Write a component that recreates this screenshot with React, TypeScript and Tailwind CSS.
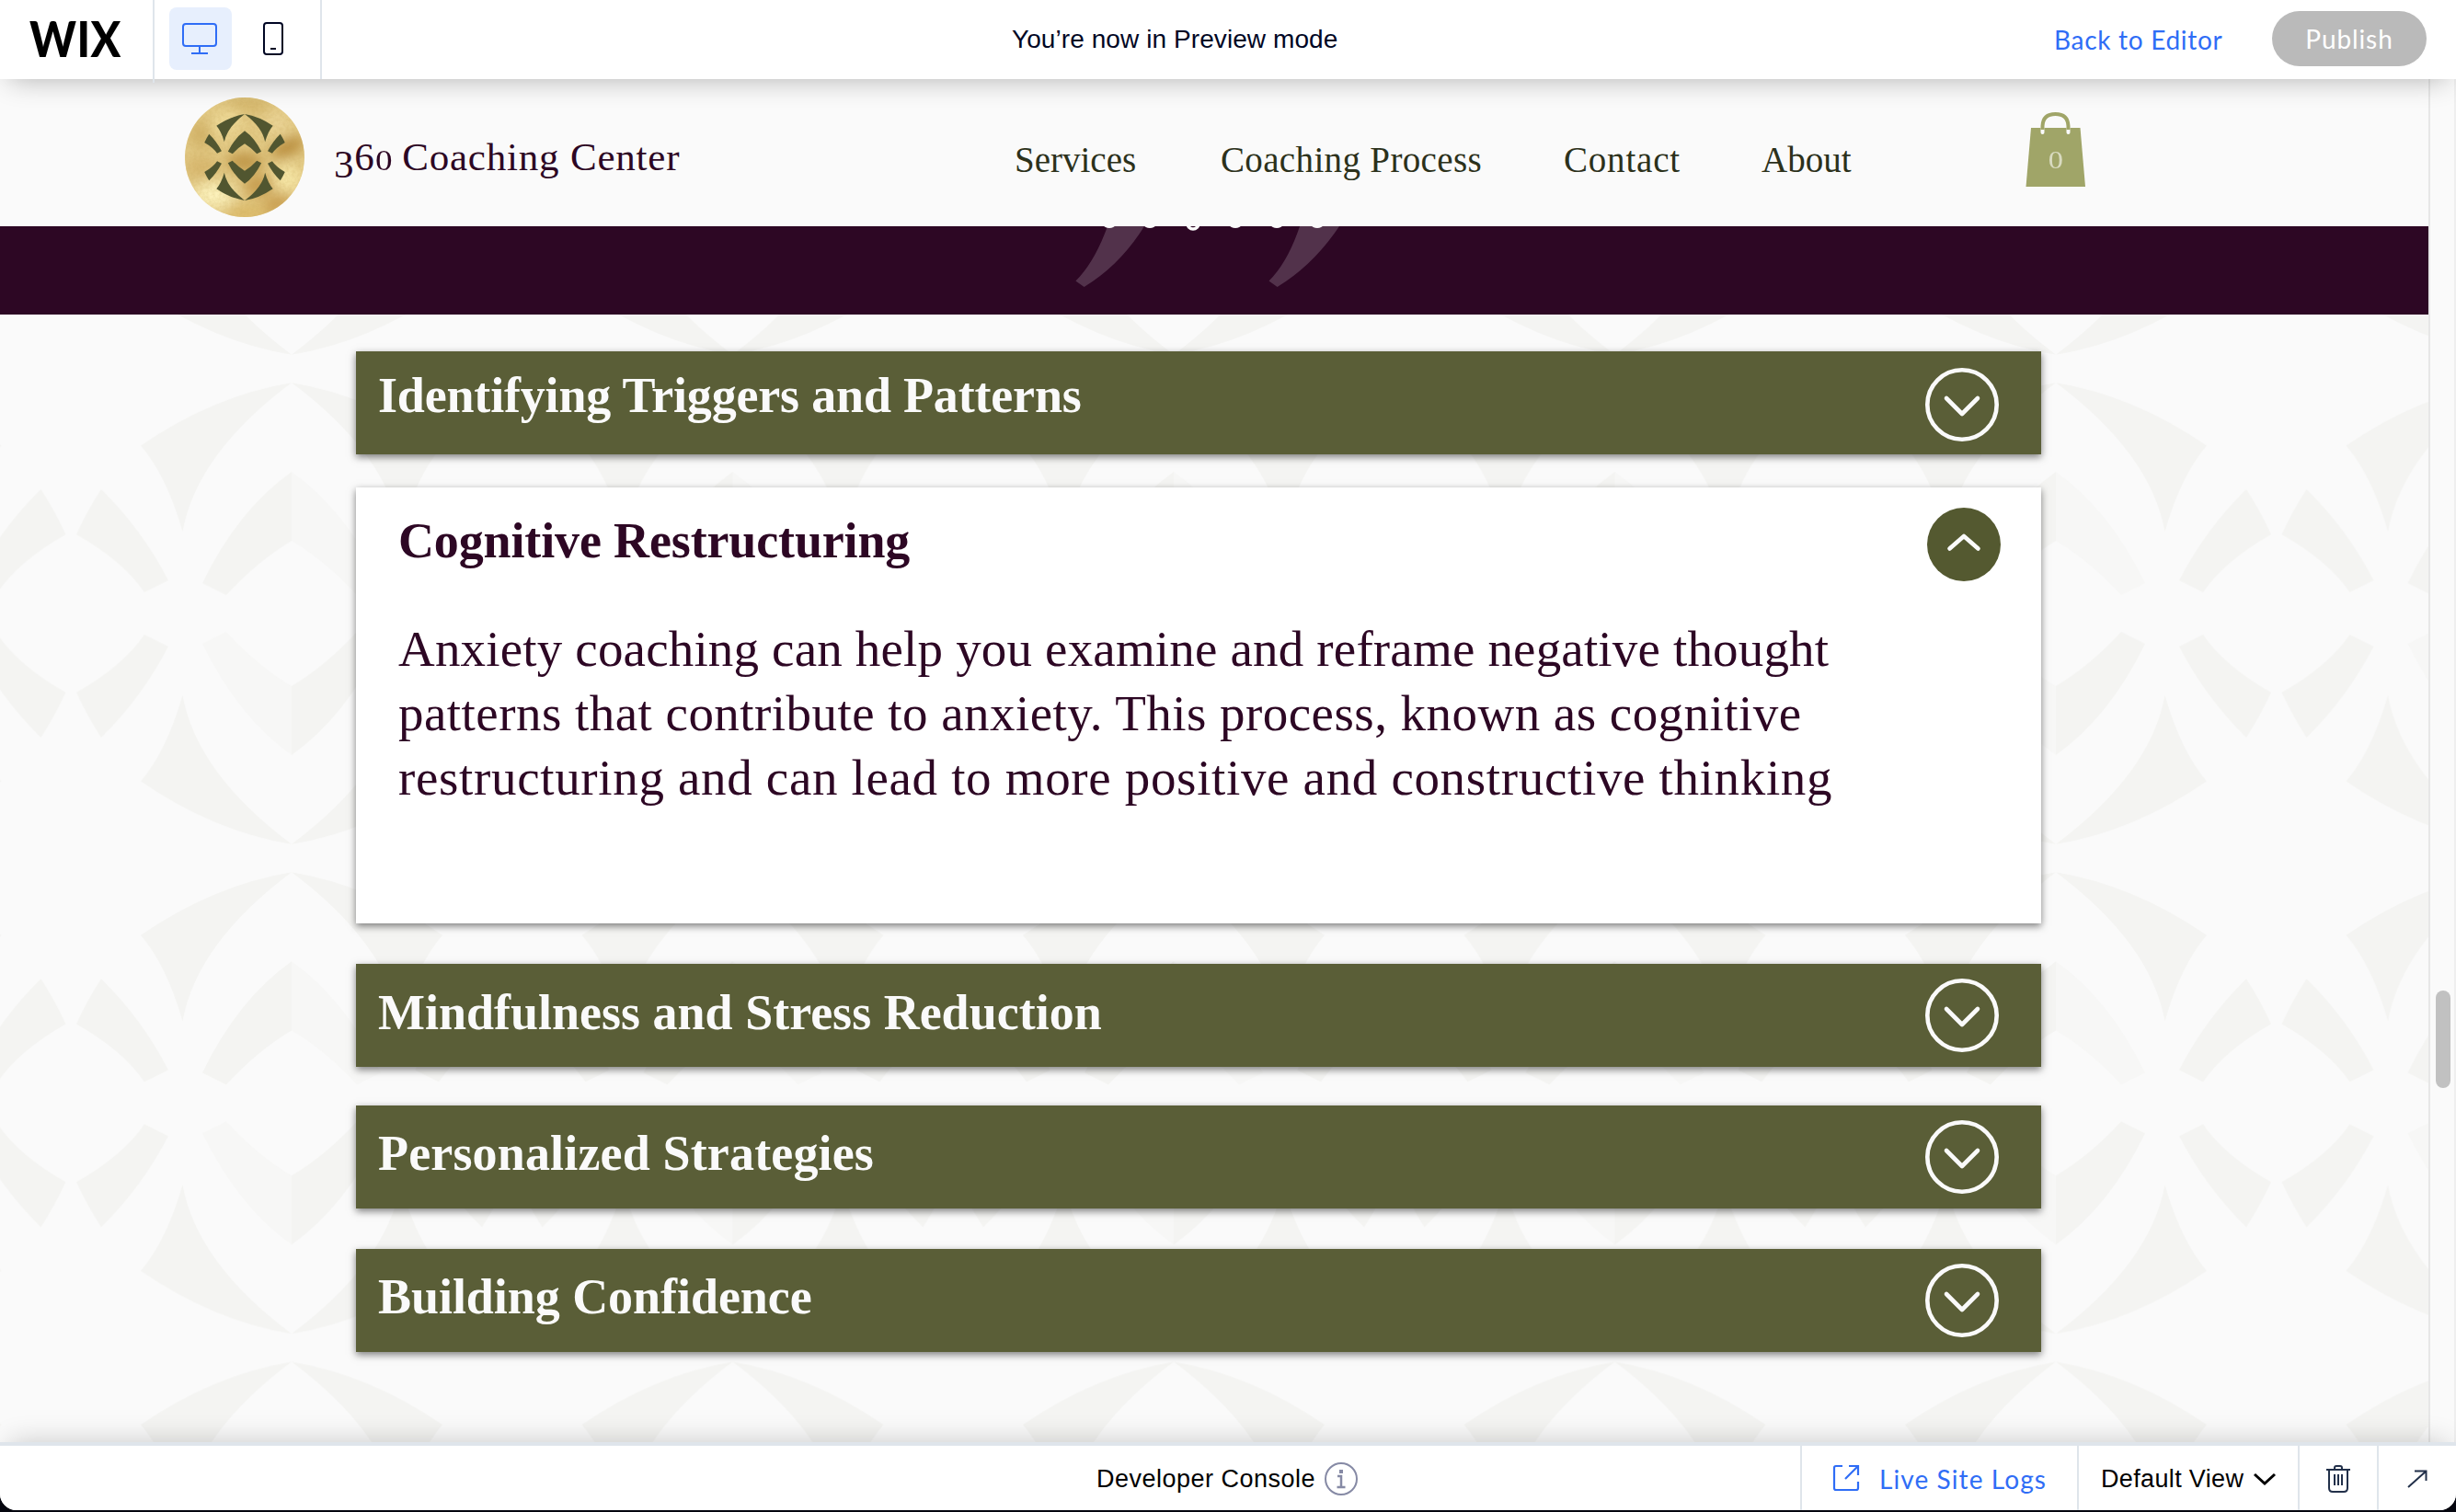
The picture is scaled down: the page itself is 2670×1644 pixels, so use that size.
import type { ReactNode } from 'react';

const SERIF = "font-['Liberation_Serif',serif]";
const SANS = "font-['Liberation_Sans',sans-serif]";
const LATO = "font-['Lato',sans-serif]";

/* One quarter of the emblem; the other three quarters are mirrored copies. */
function Quarter({ faint = false }: { faint?: boolean }) {
  return (
    <g>
      <path d="M0 -251Q-85 -237 -164 -182.5Q-136 -150 -118.5 -89Q-103 -174 0 -251Z" />
      <path d="M0 -154Q-58 -113 -97 -33L-71 -20Q-37 -57 0 -79Z" opacity={faint ? 0.5 : 1} />
      <path d="M-207 -135Q-163 -92 -134 -36L-160 -23Q-183 -57 -234 -86Q-222 -112 -207 -135Z" />
    </g>
  );
}

function Emblem({ shaded = false }: { shaded?: boolean }) {
  return (
    <g>
      <Quarter />
      <g transform="scale(-1 1)">
        <Quarter faint={shaded} />
      </g>
      <g transform="scale(1 -1)">
        <Quarter faint={shaded} />
      </g>
      <g transform="scale(-1 -1)">
        <Quarter />
      </g>
    </g>
  );
}

function BackgroundPattern() {
  return (
    <svg className="absolute inset-0 h-full w-full" aria-hidden="true">
      <defs>
        <pattern id="emblems" patternUnits="userSpaceOnUse" x="77.25" y="58.85" width="479.5" height="532.3">
          <g transform="translate(239.75 266.15)" fill="#f4f4f2">
            <Emblem shaded />
          </g>
        </pattern>
      </defs>
      <rect width="100%" height="100%" fill="url(#emblems)" />
    </svg>
  );
}

function Logo() {
  return (
    <svg width="130" height="130" viewBox="0 0 130 130" className="shrink-0">
      <defs>
        <clipPath id="disc">
          <circle cx="65" cy="65" r="65" />
        </clipPath>
        <filter id="soft" x="-50%" y="-50%" width="200%" height="200%">
          <feGaussianBlur stdDeviation="7" />
        </filter>
        <filter id="foil" x="0" y="0" width="100%" height="100%">
          <feTurbulence type="fractalNoise" baseFrequency="0.3" numOctaves="3" seed="4" />
          <feColorMatrix values="0 0 0 0 0.55  0 0 0 0 0.38  0 0 0 0 0.1  0.9 0 0 0 -0.32" />
        </filter>
      </defs>
      <g clipPath="url(#disc)">
        <rect width="130" height="130" fill="#e2c984" />
        <g filter="url(#soft)">
          <ellipse cx="20" cy="40" rx="16" ry="14" fill="#d2b267" />
          <ellipse cx="45" cy="28" rx="20" ry="12" fill="#f0dc9a" transform="rotate(-40 45 28)" />
          <ellipse cx="70" cy="8" rx="26" ry="9" fill="#d6b86d" />
          <ellipse cx="100" cy="28" rx="14" ry="14" fill="#ead394" />
          <ellipse cx="112" cy="54" rx="20" ry="9" fill="#b98d3e" transform="rotate(-25 112 54)" />
          <ellipse cx="65" cy="70" rx="20" ry="10" fill="#bf9546" />
          <ellipse cx="18" cy="76" rx="18" ry="12" fill="#d8b76e" />
          <ellipse cx="32" cy="106" rx="22" ry="14" fill="#fcf2bc" />
          <ellipse cx="80" cy="96" rx="16" ry="12" fill="#c89d50" />
          <ellipse cx="112" cy="88" rx="14" ry="14" fill="#f8e8a8" />
          <ellipse cx="100" cy="116" rx="18" ry="8" fill="#c79a4a" transform="rotate(-30 100 116)" />
          <ellipse cx="66" cy="126" rx="24" ry="8" fill="#dcb966" />
        </g>
        <rect width="130" height="130" filter="url(#foil)" opacity="0.45" />
      </g>
      <g transform="translate(65 65) scale(0.187)" fill="#515630">
        <Emblem />
      </g>
    </svg>
  );
}

function Divider({ tall = false }: { tall?: boolean }) {
  return <div className={tall ? 'h-[90px] w-[2px] self-start bg-[#dfe5eb]' : 'h-full w-[2px] bg-[#dfe5eb]'} />;
}

function TopBar() {
  return (
    <header className="relative z-20 flex h-[86px] shrink-0 items-center bg-white shadow-[0_10px_30px_-10px_rgba(0,0,0,0.3)]">
      <div className="flex h-full w-[166px] items-center pl-[32px]">
        <span className={`${LATO} -mt-[2px] origin-left scale-x-[0.91] text-[53px] leading-[86px] font-black tracking-[0.5px] text-black`}>WIX</span>
      </div>
      <Divider tall />
      <div className="flex h-full w-[180px] items-center pl-[16px]">
        <button className="flex size-[68px] -translate-y-px items-center justify-center rounded-[8px] bg-[#e7effd]">
          <svg width="40" height="36" viewBox="0 0 40 36" fill="none" stroke="#2f6df6" strokeWidth="2" className="-translate-x-px">
            <rect x="2" y="2" width="36" height="24" rx="3" />
            <path d="M20 26v7M11 34h18" />
          </svg>
        </button>
        <svg width="24" height="38" viewBox="0 0 24 38" fill="none" stroke="#000624" strokeWidth="2" className="ml-[33px] -translate-y-px">
          <rect x="2" y="2" width="20" height="34" rx="3" />
          <path d="M9 30h6" />
        </svg>
      </div>
      <Divider />
      <p className={`${SANS} ml-[750px] w-[1133px] text-[28px] leading-[86px] tracking-[0.08px] whitespace-nowrap text-[#000624]`}>You’re now in Preview mode</p>
      <a className={`${LATO} w-[237px] text-[28px] leading-[86px] tracking-[0.7px] whitespace-nowrap text-[#2f6df6]`}>Back to Editor</a>
      <button className={`${LATO} h-[60px] w-[168px] -translate-y-px rounded-full bg-[#bababa] text-[28px] tracking-[0.9px] text-white`}>Publish</button>
    </header>
  );
}

function CartIcon() {
  return (
    <div className="relative h-[82px] w-[66px]">
      <svg width="66" height="82" viewBox="0 0 66 82" fill="none">
        <path d="M6 17H59.500L65 81H0.500Z" fill="#a0a568" />
        <path d="M18.500 12V22M46.500 12V22" stroke="#fafafa" strokeWidth="4" strokeLinecap="round" />
        <path d="M18.500 19V15Q19 2 32.500 2T46.500 15V19" stroke="#a0a568" strokeWidth="4" />
      </svg>
      <span className={`${SERIF} absolute inset-x-0 top-[34px] text-center text-[27px] leading-[36px] text-[#d9dbc0]`}>
        <span className="inline-block scale-x-[1.2]">0</span>
      </span>
    </div>
  );
}

function SiteHeader() {
  return (
    <div className="flex h-[160px] shrink-0 items-center bg-[#fafafa] pt-[10px] pl-[201px]">
      <Logo />
      <p className={`${SERIF} mt-[3px] ml-[32px] w-[740px] text-[43px] leading-[60px] tracking-[0.8px] whitespace-nowrap text-[#2d0724]`}>
        <span className="relative top-[8px]">3</span>6<span className="inline-block w-[18px] origin-left scale-x-[1.2] text-[31px]">0</span> Coaching Center
      </p>
      <nav className={`${SERIF} mt-[5px] flex w-[1099px] text-[39px] leading-[60px] whitespace-nowrap text-[#2c311b]`}>
        <a className="w-[224px]">Services</a>
        <a className="w-[373px] tracking-[0.35px]">Coaching Process</a>
        <a className="w-[215px] tracking-[0.8px]">Contact</a>
        <a>About</a>
      </nav>
      <div className="-mt-[16px]">
        <CartIcon />
      </div>
    </div>
  );
}

function QuoteBand() {
  return (
    <div className="flex h-[96px] shrink-0 justify-center bg-[#2d0724]">
      <svg width="340" height="96" viewBox="1150 246 340 96">
        <g fill="#52324b">
          <path d="M1204 246H1244Q1218 288 1178.600 312L1169.400 305.500Q1190 285 1204 246Z" />
          <path d="M1413 246H1456Q1428 288 1388.600 312L1379.500 305.500Q1400 285 1413 246Z" />
        </g>
        <g fill="#fafafa">
          <ellipse cx="1206" cy="245" rx="6" ry="3" />
          <ellipse cx="1250" cy="245" rx="6" ry="3" />
          <ellipse cx="1343" cy="245" rx="6" ry="3" />
          <ellipse cx="1388" cy="245" rx="6" ry="3" />
          <ellipse cx="1432" cy="245" rx="6" ry="3" />
        </g>
        <circle cx="1297" cy="243" r="6" fill="none" stroke="#fafafa" strokeWidth="3.500" />
      </svg>
    </div>
  );
}

function ExpandIcon() {
  return (
    <svg width="80" height="80" viewBox="0 0 80 80" fill="none" stroke="#fafafa">
      <circle cx="40" cy="40" r="37.700" strokeWidth="4.600" />
      <path d="M23 33L40 50L57 33" strokeWidth="4.600" strokeLinecap="round" strokeLinejoin="round" />
    </svg>
  );
}

function CollapseIcon() {
  return (
    <svg width="80" height="80" viewBox="0 0 80 80" fill="none">
      <circle cx="40" cy="40" r="40" fill="#545930" />
      <path d="M24.500 44.500L40 31L55.500 44.500" stroke="#fafafa" strokeWidth="4.600" strokeLinecap="round" strokeLinejoin="round" />
    </svg>
  );
}

function ClosedCard({ children, className }: { children: ReactNode; className: string }) {
  return (
    <div className={`flex h-[112px] items-start justify-between bg-[#5a5e37] pr-[46px] pl-[24px] shadow-[0_3px_8px_rgba(0,0,0,0.5)] ${className}`}>
      {children}
      <ExpandIcon />
    </div>
  );
}

function Accordion() {
  const title = `${SERIF} text-[54px] leading-[60px] font-bold whitespace-nowrap text-[#fafafa]`;
  return (
    <div className="relative ml-[387px] w-[1832px] pt-[40px]">
      <ClosedCard className="pt-[18px]">
        <h2 className={`${title} tracking-[-0.18px]`}>Identifying Triggers and Patterns</h2>
      </ClosedCard>
      <section className="mt-[36px] h-[474px] bg-white pr-[44px] pl-[46px] text-[#2d0724] shadow-[0_3px_8px_rgba(0,0,0,0.5)]">
        <div className="flex h-[141px] justify-between">
          <h2 className={`${SERIF} mt-[28px] text-[54px] leading-[60px] font-bold tracking-[-0.14px] whitespace-nowrap`}>Cognitive Restructuring</h2>
          <div className="mt-[22px]">
            <CollapseIcon />
          </div>
        </div>
        <p className={`${SERIF} flex flex-col text-[55px] leading-[70px] whitespace-nowrap`}>
          <span className="tracking-[0.17px]">Anxiety coaching can help you examine and reframe negative thought</span>
          <span className="tracking-[0.46px]">patterns that contribute to anxiety. This process, known as cognitive</span>
          <span className="tracking-[0.66px]">restructuring and can lead to more positive and constructive thinking</span>
        </p>
      </section>
      <ClosedCard className="mt-[44px] pt-[16px]">
        <h2 className={`${title} mt-[7px]`}>Mindfulness and Stress Reduction</h2>
      </ClosedCard>
      <ClosedCard className="mt-[42px] pt-[16px]">
        <h2 className={`${title} mt-[6px] tracking-[0.16px]`}>Personalized Strategies</h2>
      </ClosedCard>
      <ClosedCard className="mt-[44px] pt-[16px]">
        <h2 className={`${title} mt-[6px] tracking-[-0.05px]`}>Building Confidence</h2>
      </ClosedCard>
    </div>
  );
}

function ConsoleBar() {
  return (
    <footer className="relative z-20 flex h-[74px] shrink-0 items-center border-t-4 border-[#dfe5eb] bg-white pl-[1192px] shadow-[0_-10px_30px_-10px_rgba(0,0,0,0.2)]">
      <div className="flex w-[765px] items-center pt-[2px]">
        <span className={`${SANS} text-[27px] leading-[70px] tracking-[0.5px] whitespace-nowrap text-black`}>Developer Console</span>
        <svg width="36" height="36" viewBox="0 0 36 36" fill="none" stroke="#868aa5" strokeWidth="2" className="ml-[10px]">
          <circle cx="18" cy="18" r="17" />
          <path d="M18 8v4" strokeWidth="4" />
          <path d="M14 15h4v12M13.500 27h9" strokeWidth="2.500" />
        </svg>
      </div>
      <Divider />
      <div className="flex w-[299px] items-center pt-[2px] pl-[32px]">
        <svg width="32" height="32" viewBox="0 0 32 32" fill="none" stroke="#2f6df6" strokeWidth="2.200" className="-translate-y-px">
          <path d="M12 3H5Q3 3 3 5V27Q3 29 5 29H27Q29 29 29 27V20M19 3H29V13M29 3L15 17" />
        </svg>
        <span className={`${LATO} ml-[20px] text-[28px] leading-[70px] tracking-[1.1px] whitespace-nowrap text-[#2f6df6]`}>Live Site Logs</span>
      </div>
      <Divider />
      <div className="flex w-[238px] items-center pt-[2px] pl-[24px]">
        <span className={`${SANS} text-[27px] leading-[70px] tracking-[0.35px] whitespace-nowrap text-black`}>Default View</span>
        <svg width="26" height="16" viewBox="0 0 26 16" fill="none" stroke="#000" strokeWidth="3" className="ml-[10px]">
          <path d="M2 3L13 13L24 3" />
        </svg>
      </div>
      <Divider />
      <div className="flex w-[84px] justify-center pt-[2px]">
        <svg width="26" height="30" viewBox="0 0 26 30" fill="none" stroke="#22304a" strokeWidth="2">
          <path d="M0 5H26M9 5V3Q9 1 11 1H15Q17 1 17 3V5M3 5V25Q3 29 7 29H19Q23 29 23 25V5M9 10V22M13 10V22M17 10V22" />
        </svg>
      </div>
      <Divider />
      <svg width="22" height="22" viewBox="0 0 22 22" fill="none" stroke="#22304a" strokeWidth="2" className="mt-[2px] ml-[31px]">
        <path d="M1 20L20 3M8 2.500H20.500V13" />
      </svg>
    </footer>
  );
}

export default function App() {
  return (
    <div className="h-[1644px] w-[2670px] overflow-hidden bg-[#05060f]">
      <div className="flex h-[1642px] flex-col overflow-hidden rounded-b-[18px] bg-[#fafafa]">
        <TopBar />
        <div className="flex h-[1482px] shrink-0">
          <main className="flex w-[2640px] flex-col overflow-hidden bg-[#fafafa]">
            <SiteHeader />
            <QuoteBand />
            <div className="relative flex-1 overflow-hidden">
              <BackgroundPattern />
              <Accordion />
            </div>
          </main>
          <aside className="flex w-[30px] flex-col border-x-2 border-l-[#e7e7e7] border-r-[#efefef] bg-[#fafafa] pt-[991px] pl-[6px]">
            <div className="h-[106px] w-[16px] rounded-full bg-[#c1c1c1]" />
          </aside>
        </div>
        <ConsoleBar />
      </div>
    </div>
  );
}
